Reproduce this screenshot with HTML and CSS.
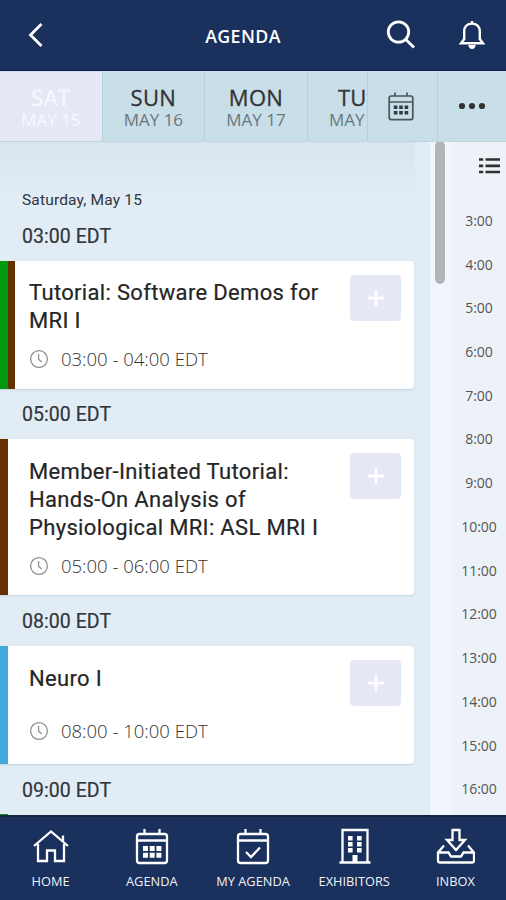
FILE: index.html
```html
<!DOCTYPE html>
<html lang="en">
<head>
<meta charset="utf-8">
<title>Agenda</title>
<link rel="stylesheet" href="styles.css">
</head>
<body>
<svg class="defs" width="0" height="0">
  <symbol id="clock" viewBox="0 0 20 20"><circle cx="10" cy="10" r="8.4"/><path d="M9.6 5V10.3L12.6 13"/></symbol>
  <symbol id="plus" viewBox="0 0 18 18"><path d="M9 1V17M1 9H17"/></symbol>
</svg>
<div class="app">
  <header class="topbar">
    <svg class="back" width="16" height="26" viewBox="0 0 16 26"><path d="M13.5 2 L2.5 13 L13.5 24"/></svg>
    <h1 class="title">AGENDA</h1>
    <svg class="search" width="30" height="30" viewBox="0 0 30 30"><circle cx="12.5" cy="12" r="10.2"/><path d="M19.8 19.5 L28 27.5"/></svg>
    <svg class="bell" width="26" height="30" viewBox="0 0 26 30"><path d="M13 1V3.5M2 23.3H24L20.8 19V11.5C20.8 6.5 17.6 3.6 13 3.6S5.2 6.5 5.2 11.5V19Z"/><path class="solid" d="M9.3 25H16.7C16.4 27.6 15 29 13 29S9.6 27.6 9.3 25Z"/></svg>
  </header>
  <nav class="days">
    <div class="strip">
      <div class="day active"><b>SAT</b><span>MAY 15</span></div>
      <div class="day"><b>SUN</b><span>MAY 16</span></div>
      <div class="day"><b>MON</b><span>MAY 17</span></div>
      <div class="day"><b>TUE</b><span>MAY 18</span></div>
    </div>
    <div class="tool cal">
      <svg width="26" height="29" viewBox="0 0 26 29"><rect x="1.2" y="4" width="23.6" height="23.6" rx="2"/><path d="M1.2 10H24.8M7 .5V4M19 .5V4"/><path class="dots" d="M5.8 13.5h3.6v3.6h-3.6zM11.2 13.5h3.6v3.6h-3.6zM16.6 13.5h3.6v3.6h-3.6zM5.8 19h3.6v3.6h-3.6zM11.2 19h3.6v3.6h-3.6zM16.6 19h3.6v3.6h-3.6z"/></svg>
    </div>
    <div class="tool more">
      <svg width="28" height="8" viewBox="0 0 28 8"><circle cx="4" cy="4" r="3.1"/><circle cx="14" cy="4" r="3.1"/><circle cx="24" cy="4" r="3.1"/></svg>
    </div>
  </nav>
  <main class="body">
    <section class="list">
      <p class="date">Saturday, May 15</p>
      <h2 class="slot first">03:00 EDT</h2>
      <article class="card tutorial">
        <i class="bar green"></i><i class="bar brown"></i>
        <div class="info"><h3>Tutorial: Software Demos for MRI I</h3><p class="when"><svg class="clock"><use href="#clock"/></svg><span>03:00 - 04:00 EDT</span></p></div>
        <button class="add"><svg><use href="#plus"/></svg></button>
      </article>
      <h2 class="slot second">05:00 EDT</h2>
      <article class="card member">
        <i class="bar brown"></i>
        <div class="info"><h3>Member-Initiated Tutorial: Hands-On Analysis of Physiological MRI: ASL MRI I</h3><p class="when"><svg class="clock"><use href="#clock"/></svg><span>05:00 - 06:00 EDT</span></p></div>
        <button class="add"><svg><use href="#plus"/></svg></button>
      </article>
      <h2 class="slot">08:00 EDT</h2>
      <article class="card neuro">
        <i class="bar blue"></i>
        <div class="info"><h3>Neuro I</h3><p class="when"><svg class="clock"><use href="#clock"/></svg><span>08:00 - 10:00 EDT</span></p></div>
        <button class="add"><svg><use href="#plus"/></svg></button>
      </article>
      <h2 class="slot last">09:00 EDT</h2>
      <i class="next"></i>
    </section>
    <div class="gutter"><i class="thumb"></i></div>
    <aside class="hours">
      <svg class="listicon" width="21" height="18" viewBox="0 0 21 18"><path d="M0 2.5H4.2M6.5 2.5H21M0 8.8H4.2M6.5 8.8H21M0 15H4.2M6.5 15H21"/></svg>
      <ol><li>3:00</li><li>4:00</li><li>5:00</li><li>6:00</li><li>7:00</li><li>8:00</li><li>9:00</li><li>10:00</li><li>11:00</li><li>12:00</li><li>13:00</li><li>14:00</li><li>15:00</li><li>16:00</li></ol>
    </aside>
  </main>
  <footer class="tabs">
    <div class="tab"><svg viewBox="0 0 40 38"><path d="M3 18 L20 3.5 L37 18M7 16V33H16V22.5H24V33H33V16M32 13V7.5"/></svg><span>HOME</span></div>
    <div class="tab"><svg viewBox="0 0 40 38"><rect x="5" y="6" width="30" height="29" rx="2.5"/><path d="M5 12.5H35M12.5 1V6M27.5 1V6"/><path class="solid" d="M11 18h5v5h-5zM17.7 18h5v5h-5zM24.4 18h5v5h-5zM11 24.7h5v5h-5zM17.7 24.7h5v5h-5zM24.4 24.7h5v5h-5z"/></svg><span>AGENDA</span></div>
    <div class="tab"><svg viewBox="0 0 40 38"><rect x="5" y="6" width="30" height="29" rx="2.5"/><path d="M5 12.5H35M12.5 1V6M27.5 1V6M13 24 L18 29 L27 19.5"/></svg><span>MY AGENDA</span></div>
    <div class="tab"><svg viewBox="0 0 40 38"><path d="M8.5 34.5V2H33.5V34.5M5.5 34.5H36.5"/><path class="solid" d="M14 8h4.6v4.6h-4.6zM23 8h4.6v4.6h-4.6zM14 14h4.6v4.6h-4.6zM23 14h4.6v4.6h-4.6zM14 20h4.6v4.6h-4.6zM23 20h4.6v4.6h-4.6zM18.5 27h5v8h-5z"/></svg><span>EXHIBITORS</span></div>
    <div class="tab"><svg viewBox="0 0 40 38"><path d="M17.5 2H24.5V12H30L21 22L12 12H17.5ZM9 17.5L3 24.5V32.5Q3 34.5 5 34.5H37Q39 34.5 39 32.5V24.5L33 17.5M3 24.5H13.5L16 28.5H26L28.5 24.5H39"/></svg><span>INBOX</span></div>
  </footer>
</div>
</body>
</html>
```
FILE: styles.css
```css
* { box-sizing: border-box; margin: 0; padding: 0; }
body { width: 506px; height: 900px; overflow: hidden; font-family: Roboto, "Liberation Sans", sans-serif; }
.defs { position: absolute; }
svg { display: block; fill: none; flex: none; }
.app { display: flex; flex-direction: column; height: 900px; }

.topbar { display: flex; align-items: center; height: 71px; padding: 0 21px 0 28px; background: #1a305d; border-bottom: 1px solid #101c5c; stroke: #fff; stroke-width: 2.8; flex: none; }
.title { flex: 1; padding: 1px 0 0 56px; text-align: center; color: #fff; stroke: none; font: 600 17.8px/24px "Open Sans", sans-serif; letter-spacing: .4px; }
.search { margin-right: 43px; }
.bell { stroke-width: 2.4; }
.solid { fill: #fff; stroke: none; }

.days { display: flex; height: 71px; flex: none; background: #c8dfe9; border-bottom: 1px solid #bed5de; border-top: 1px solid #d2e3ed; font-family: "Open Sans", sans-serif; }
.strip { display: flex; width: 367px; overflow: hidden; }
.day { display: flex; flex-direction: column; align-items: center; flex: 0 0 102.6px; border-right: 1px solid #b7d0db; padding-top: 11px; color: #333; }
.day b { font-size: 22px; font-weight: 400; line-height: 28px; letter-spacing: .3px; -webkit-text-stroke: .3px currentColor; }
.day span { font-size: 17px; line-height: 17px; color: #68777e; }
.day.active, .day.active span { color: #f7f8fd; }
.day.active { background: #e7e8f6; }
.tool { display: flex; align-items: center; justify-content: center; border-left: 1px solid #b7d0db; }
.cal { width: 70px; stroke: #4c555a; stroke-width: 1.7; padding-right: 4px; }
.dots { fill: #333b40; stroke: none; }
.more { width: 69px; padding-bottom: 2px; }
.more svg { fill: #333; }

.body { display: flex; flex: 1; min-height: 0; overflow: hidden; }
.list { width: 430px; background: linear-gradient(#d9e4ed, #e1ecf5 56px) no-repeat 0 0 / 415px 60px #e1ecf5; }
.date { padding: 48px 0 0 22px; font-size: 15.5px; line-height: 21px; letter-spacing: .17px; color: #30363b; }
.slot { height: 51px; padding: 15px 0 12px 22px; font-size: 19.5px; font-weight: 400; line-height: 24px; letter-spacing: .05px; color: #30363b; -webkit-text-stroke: .2px #30363b; }
.slot.first, .slot.second { height: 50px; padding-top: 14px; }
.card { display: flex; width: 414px; background: #fff; border-radius: 0 4px 4px 0; box-shadow: 0 1px 2px #bdd3df; }
.tutorial { height: 128px; }
.member { height: 156px; }
.neuro { height: 118px; }
.bar { width: 7.5px; flex: none; }
.green { background: #00990e; }
.brown { background: #673000; }
.blue { background: #43a8dc; }
.info { flex: 1; display: flex; flex-direction: column; padding: 19px 0 17px 21.5px; }
.tutorial .info { padding: 18px 0 18px 14px; }
.neuro .info { padding-bottom: 21px; }
h3 { width: 310px; font-size: 22px; line-height: 28px; font-weight: 400; letter-spacing: .33px; color: #252525; -webkit-text-stroke: .2px #252525; }
.when { display: flex; align-items: center; gap: 12px; margin-top: auto; font: 300 18.5px/24px "Open Sans", sans-serif; color: #333; white-space: nowrap; }
.clock { width: 20px; height: 20px; stroke: #8f8f8f; stroke-width: 1.3; }
.add { display: flex; align-items: center; justify-content: center; width: 51px; height: 46px; margin: 14px 13px 0 -40px; border: 0; border-radius: 4px; background: #e7e8f6; flex: none; }
.add svg { width: 18px; height: 18px; stroke: #fff; stroke-width: 2.6; }
.slot.last { height: 50px; }
.next { display: block; width: 8px; height: 4px; background: #00990e; }
.gutter { width: 22px; background: #f0f6fc; }
.thumb { display: block; width: 10px; height: 143px; margin: -1px 0 0 5px; border-radius: 5px; background: #b1b5b8; }
.hours { flex: 1; background: #edf2f9; }
.listicon { margin: 15px 0 0 27px; stroke: #303030; stroke-width: 2.7; }
ol { list-style: none; margin-top: 23.8px; }
li { height: 43.74px; font: 400 14px/43.74px "Open Sans", sans-serif; text-align: center; color: #555; }

.tabs { display: flex; height: 85px; flex: none; background: #1a305d; border-top: 2px solid #142441; }
.tab { flex: 1; display: flex; flex-direction: column; align-items: center; padding-top: 11px; stroke: #fff; stroke-width: 2.3; }
.tab svg { width: 40px; height: 38px; }
.tab span { margin-top: 6px; font: 400 12.8px/18px "Open Sans", sans-serif; color: #f0f3f8; stroke: none; white-space: nowrap; }
```
